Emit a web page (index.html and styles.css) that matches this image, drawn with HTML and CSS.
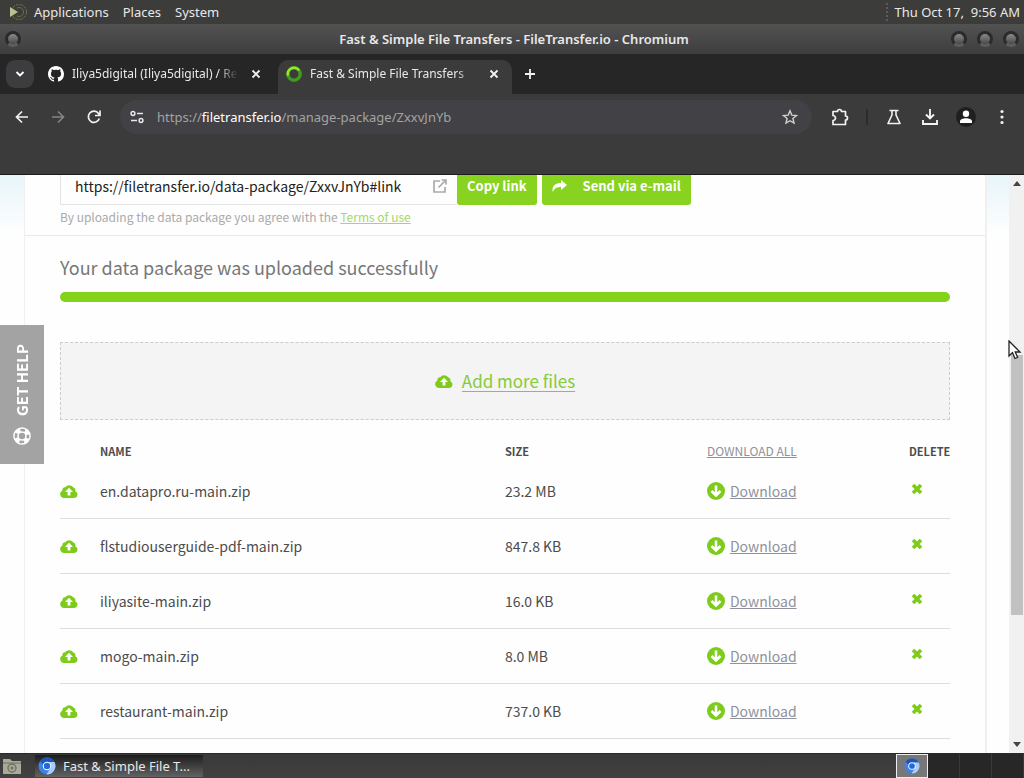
FILE: index.html
```
<!DOCTYPE html>
<html lang="en">
<head>
    <meta charset="UTF-8">
    <meta name="viewport" content="width=device-width, initial-scale=1.0">
    <title>Fast &amp; Simple File Transfers - FileTransfer.io</title>

    <link rel="stylesheet" href="styles.css">
</head>
<body>

    <!-- Shared icons -->
    <svg class="sprite" aria-hidden="true">
        <symbol id="cloud" viewBox="0 0 18 14">
            <path fill="#7ecb1c" d="M4 14a4 4 0 0 1-1.600-7.600A3 3 0 0 1 5.200 3.200 5 5 0 0 1 13.500 3.600 3 3 0 0 1 15.300 7.300 3.500 3.500 0 0 1 14.500 14z"/>
            <path fill="#fff" d="M9 3.800l4 4.200h-2.600v3.400H7.600V8H5z"/>
        </symbol>
        <symbol id="down" viewBox="0 0 18 18">
            <circle cx="9" cy="9" r="9" fill="#7ecb1c"/>
            <path d="M9 3.500v9.500M4.500 9L9 13.500 13.500 9" fill="none" stroke="#fff" stroke-width="2.600"/>
        </symbol>
        <symbol id="cross" viewBox="0 0 12 12">
            <path d="M2 2l8 8M10 2l-8 8" stroke="#7ecb1c" stroke-width="3.600" fill="none"/>
        </symbol>
        <symbol id="close" viewBox="0 0 10 10">
            <path d="M1.500 1.500l7 7M8.500 1.500l-7 7" stroke="#f2f2f2" stroke-width="1.800" fill="none"/>
        </symbol>
        <symbol id="chromium" viewBox="0 0 18 18">
            <circle cx="9" cy="9" r="8.500" fill="#3f82e8"/>
            <path d="M9 .5A8.500 8.500 0 0 1 16.400 5H9a4 4 0 0 0-3.800 3L2 4.200A8.500 8.500 0 0 1 9 .5z" fill="#1c57b8"/>
            <path d="M16.400 5A8.500 8.500 0 0 1 8.500 17.500L12.400 11A4 4 0 0 0 12 6.300L11 5z" fill="#a9cdfb"/>
            <circle cx="9" cy="9" r="4.200" fill="#fff"/>
            <circle cx="9" cy="9" r="3.200" fill="#2468d8"/>
        </symbol>
    </svg>

    <!-- Desktop panel -->
    <nav class="panel">
        <svg width="18" height="18" viewBox="0 0 18 18">
            <circle cx="10" cy="9" r="7.500" fill="none" stroke="#697346" stroke-dasharray="3 1"/>
            <path d="M8 5a4.500 4.500 0 1 1 0 8" fill="none" stroke="#697346"/>
            <path d="M1 4l8 5-8 5z" fill="#b9c28e"/>
        </svg>
        <a href="#">Applications</a>
        <a href="#">Places</a>
        <a href="#">System</a>
        <time class="clock">Thu Oct 17,&nbsp; 9:56 AM</time>
    </nav>

    <!-- Window title -->
    <header class="titlebar">
        <button class="knob" aria-label="Menu"></button>
        <h1>Fast &amp; Simple File Transfers - FileTransfer.io - Chromium</h1>
        <div class="knobs">
            <button class="knob" aria-label="Minimize"></button>
            <button class="knob" aria-label="Maximize"></button>
            <button class="knob" aria-label="Close"></button>
        </div>
    </header>

    <!-- Tabs -->
    <div class="tabs">
        <button class="tab-search" aria-label="Search tabs">
            <svg width="10" height="8" viewBox="0 0 10 8"><path d="M1.500 2L5 5.500 8.500 2" fill="none" stroke="#fff" stroke-width="1.800"/></svg>
        </button>
        <div class="tab">
            <svg width="16" height="16" viewBox="0 0 16 16"><path fill="#fff" d="M8 0C3.580 0 0 3.580 0 8c0 3.540 2.290 6.530 5.470 7.590.4.070.55-.17.55-.38 0-.19-.01-.82-.01-1.490-2.010.37-2.530-.49-2.690-.94-.09-.23-.48-.94-.82-1.130-.28-.15-.68-.52-.01-.53.63-.01 1.080.58 1.230.82.72 1.210 1.870.87 2.330.66.070-.52.28-.87.51-1.070-1.780-.2-3.640-.89-3.640-3.950 0-.87.31-1.590.82-2.150-.08-.2-.36-1.020.08-2.120 0 0 .67-.21 2.200.82.64-.18 1.320-.27 2-.27s1.360.09 2 .27c1.530-1.040 2.200-.82 2.200-.82.44 1.100.16 1.920.08 2.120.51.56.82 1.270.82 2.150 0 3.070-1.870 3.750-3.650 3.950.29.25.54.73.54 1.480 0 1.070-.01 1.930-.01 2.200 0 .21.15.46.55.38A8 8 0 0 0 16 8c0-4.420-3.580-8-8-8z"/></svg>
            <span class="tab-name">Iliya5digital (Iliya5digital) / Re</span>
            <button class="tab-close" aria-label="Close tab"><svg width="10" height="10"><use href="#close"/></svg></button>
        </div>
        <div class="tab active">
            <svg width="16" height="16" viewBox="0 0 16 16">
                <circle cx="8" cy="8" r="6.200" fill="none" stroke="#3f9c1c" stroke-width="3.400"/>
                <path d="M2 9.500A6.200 6.200 0 0 1 13 4.300" fill="none" stroke="#9be32c" stroke-width="2.600"/>
            </svg>
            <span class="tab-name">Fast &amp; Simple File Transfers</span>
            <button class="tab-close" aria-label="Close tab"><svg width="10" height="10"><use href="#close"/></svg></button>
        </div>
        <button class="new-tab" aria-label="New tab">
            <svg width="12" height="12" viewBox="0 0 12 12"><path d="M6 1v10M1 6h10" stroke="#f2f2f2" stroke-width="1.800"/></svg>
        </button>
    </div>

    <!-- Toolbar -->
    <div class="toolbar">
        <button aria-label="Back"><svg width="14" height="14" viewBox="0 0 14 14"><path d="M13 7H2M7 1.500L1.500 7 7 12.500" fill="none" stroke="#f2f2f2" stroke-width="1.700"/></svg></button>
        <button aria-label="Forward"><svg width="14" height="14" viewBox="0 0 14 14"><path d="M1 7h11M7 1.500L12.500 7 7 12.500" fill="none" stroke="#858585" stroke-width="1.600"/></svg></button>
        <button aria-label="Reload"><svg width="14" height="14" viewBox="0 0 14 14"><path d="M12.300 8.500A5.600 5.600 0 1 1 11.500 3.500L12.500 5M13 .5V5.500H8" fill="none" stroke="#f2f2f2" stroke-width="1.700"/></svg></button>
        <div class="address">
            <svg width="14" height="14" viewBox="0 0 14 14" fill="none" stroke="#e6e6e6" stroke-width="1.500"><circle cx="3" cy="3.500" r="1.900"/><path d="M7 3.500h6M1 10.500h6"/><circle cx="11" cy="10.500" r="1.900"/></svg>
            <div class="url" role="textbox" aria-label="Address">https://<b>filetransfer.io</b>/manage-package/ZxxvJnYb</div>
            <svg width="16" height="16" viewBox="0 0 16 16"><path d="M8 1.800l1.800 4.300 4.700.4-3.600 3 1.100 4.600L8 11.700l-4 2.400 1.100-4.600-3.600-3 4.700-.4z" fill="none" stroke="#d0d0d0" stroke-width="1.400"/></svg>
        </div>
        <button aria-label="Extensions"><svg width="18" height="18" viewBox="0 0 18 18"><path d="M2 3.500H6.500A2 2 0 0 1 10.500 3.500H14.500V8A2 2 0 0 1 14.500 12V16.500H2V12.500A2.200 2.200 0 0 0 2 7.500z" fill="none" stroke="#f2f2f2" stroke-width="1.700" stroke-linejoin="round"/></svg></button>
        <span class="divider"></span>
        <button aria-label="Experiments"><svg width="16" height="16" viewBox="0 0 16 16"><path d="M3.500 1.500h9M6 1.500V6L2 14.500h12L10 6V1.500" fill="none" stroke="#f2f2f2" stroke-width="1.600" stroke-linejoin="round"/></svg></button>
        <button aria-label="Downloads"><svg width="18" height="18" viewBox="0 0 18 18"><path d="M9 1v9M5 6.500l4 4 4-4M2 12v4h14v-4" fill="none" stroke="#f2f2f2" stroke-width="1.900"/></svg></button>
        <button aria-label="Profile"><svg width="20" height="20" viewBox="0 0 20 20"><circle cx="10" cy="10" r="10" fill="#1f1f1f"/><circle cx="10" cy="6.800" r="3.200" fill="#fff"/><path d="M4 16v-1.500c0-4.300 12-4.300 12 0V16z" fill="#fff"/></svg></button>
        <button aria-label="Menu"><svg width="4" height="16" viewBox="0 0 4 16" fill="#f2f2f2"><circle cx="2" cy="2.500" r="1.600"/><circle cx="2" cy="8" r="1.600"/><circle cx="2" cy="13.500" r="1.600"/></svg></button>
    </div>

    <!-- Web page -->
    <div class="viewport">
        <main class="page">
            <div class="card">
                <section class="share">
                    <div class="share-row">
                        <div class="link-box">
                            <input type="text" aria-label="Package link" value="https://filetransfer.io/data-package/ZxxvJnYb#link" readonly>
                            <svg width="14" height="14" viewBox="0 0 14 14"><path d="M7 2H1v11h11V8M8.500 1H13v4.500M13 1L5.500 8.500" fill="none" stroke="#aaa" stroke-width="1.700"/></svg>
                        </div>
                        <button class="btn copy">Copy link</button>
                        <button class="btn mail">
                            <svg width="15" height="12" viewBox="0 0 15 12"><path d="M9 0l6 5-6 5V7C5 7 2.500 8 .8 12-.5 6.500 3 3 9 3z" fill="#fff"/></svg>
                            Send via e-mail
                        </button>
                    </div>
                    <p class="terms">By uploading the data package you agree with the <a href="#">Terms of use</a></p>
                </section>

                <section class="files">
                    <h2>Your data package was uploaded successfully</h2>
                    <div class="progress"></div>

                    <div class="dropzone">
                        <svg width="18" height="14"><use href="#cloud"/></svg>
                        <a href="#">Add more files</a>
                    </div>

                    <table>
                        <thead>
                            <tr><th class="col-icon"></th><th class="col-name">Name</th><th class="col-size">Size</th><th class="col-get"><a href="#">Download all</a></th><th>Delete</th></tr>
                        </thead>
                        <tbody>
                            <tr>
                                <td><svg width="18" height="14"><use href="#cloud"/></svg></td>
                                <td>en.datapro.ru-main.zip</td>
                                <td>23.2 MB</td>
                                <td><div class="get"><svg width="18" height="18"><use href="#down"/></svg><a href="#">Download</a></div></td>
                                <td><button class="delete" aria-label="Delete"><svg width="12" height="12"><use href="#cross"/></svg></button></td>
                            </tr>
                            <tr>
                                <td><svg width="18" height="14"><use href="#cloud"/></svg></td>
                                <td>flstudiouserguide-pdf-main.zip</td>
                                <td>847.8 KB</td>
                                <td><div class="get"><svg width="18" height="18"><use href="#down"/></svg><a href="#">Download</a></div></td>
                                <td><button class="delete" aria-label="Delete"><svg width="12" height="12"><use href="#cross"/></svg></button></td>
                            </tr>
                            <tr>
                                <td><svg width="18" height="14"><use href="#cloud"/></svg></td>
                                <td>iliyasite-main.zip</td>
                                <td>16.0 KB</td>
                                <td><div class="get"><svg width="18" height="18"><use href="#down"/></svg><a href="#">Download</a></div></td>
                                <td><button class="delete" aria-label="Delete"><svg width="12" height="12"><use href="#cross"/></svg></button></td>
                            </tr>
                            <tr>
                                <td><svg width="18" height="14"><use href="#cloud"/></svg></td>
                                <td>mogo-main.zip</td>
                                <td>8.0 MB</td>
                                <td><div class="get"><svg width="18" height="18"><use href="#down"/></svg><a href="#">Download</a></div></td>
                                <td><button class="delete" aria-label="Delete"><svg width="12" height="12"><use href="#cross"/></svg></button></td>
                            </tr>
                            <tr>
                                <td><svg width="18" height="14"><use href="#cloud"/></svg></td>
                                <td>restaurant-main.zip</td>
                                <td>737.0 KB</td>
                                <td><div class="get"><svg width="18" height="18"><use href="#down"/></svg><a href="#">Download</a></div></td>
                                <td><button class="delete" aria-label="Delete"><svg width="12" height="12"><use href="#cross"/></svg></button></td>
                            </tr>
                        </tbody>
                    </table>
                </section>
            </div>
        </main>

        <div class="scrollbar">
            <svg width="8" height="5" viewBox="0 0 8 5"><path d="M0 5l4-5 4 5z" fill="#444"/></svg>
            <div class="track"><div class="thumb"></div></div>
            <svg width="8" height="5" viewBox="0 0 8 5"><path d="M0 0l4 5 4-5z" fill="#444"/></svg>
        </div>

        <button class="help">
            <svg width="18" height="18" viewBox="0 0 18 18"><circle cx="9" cy="9" r="6" fill="none" stroke="#fff" stroke-width="5.600"/><circle cx="9" cy="9" r="6" fill="none" stroke="#a3a3a3" stroke-width="2.600" stroke-dasharray="4.700 4.725" stroke-dashoffset="2.350"/></svg>
            <span>GET HELP</span>
        </button>

        <svg class="cursor" width="14" height="20" viewBox="0 0 14 20"><path d="M1 1v15l3.500-3.300L7 18.500l2.600-1.200L7.200 12H12z" fill="#fff" stroke="#222" stroke-width="1.300"/></svg>
    </div>

    <!-- Taskbar -->
    <footer class="taskbar">
        <button class="show-desktop" aria-label="Files">
            <svg width="20" height="18" viewBox="0 0 20 18"><path d="M1 2h7l2 2h9v13H1z" fill="#a9ab98"/><path d="M1 6h18" stroke="#6d705f"/><circle cx="10" cy="11" r="4" fill="none" stroke="#6d705f" stroke-width="1.300"/><circle cx="10" cy="11" r="1.500" fill="#6d705f"/></svg>
        </button>
        <button class="task">
            <svg width="18" height="18"><use href="#chromium"/></svg>
            <span>Fast &amp; Simple File T...</span>
        </button>
        <div class="workspaces">
            <button class="current" aria-label="Workspace 1"><svg width="16" height="16" viewBox="0 0 18 18"><use href="#chromium"/></svg></button>
            <button aria-label="Workspace 2"></button>
            <button aria-label="Workspace 3"></button>
            <button aria-label="Workspace 4"></button>
        </div>
    </footer>

</body>
</html>
```
FILE: styles.css
```
/* General Styling */
* { margin: 0; padding: 0; box-sizing: border-box; }
body {
    height: 100vh;
    display: flex;
    flex-direction: column;
    overflow: hidden;
    font-family: "Noto Sans", sans-serif;
    font-size: 13px;
    line-height: 18px;
    color: #e8e8e8;
    background: #3b3b3b;
}

button {
    font: inherit;
    color: inherit;
    background: none;
    border: none;
    cursor: pointer;
}

svg { display: block; flex: none; }
.sprite { position: absolute; width: 0; height: 0; }

/* Desktop panel */
.panel {
    height: 24px;
    flex: none;
    display: flex;
    align-items: center;
    padding: 0 4px 0 9px;
    background: #3c3c3b;
}

.panel a {
    color: #e8e8e8;
    text-decoration: none;
    margin-right: 14px;
}

.panel svg { margin-right: 7px; }

.clock {
    margin-left: auto;
    padding-left: 6px;
    border-left: 2px dotted #5c5c5c;
}

/* Window title */
.titlebar {
    height: 30px;
    flex: none;
    display: grid;
    grid-template-columns: 1fr auto 1fr;
    align-items: center;
    padding: 0 5px;
    background: linear-gradient(#525252, #3e3e3e);
}

.titlebar h1 {
    padding-left: 4px;
    font-size: 13px;
    font-weight: 600;
}

.knobs {
    display: flex;
    gap: 10px;
    justify-content: flex-end;
}

.knob {
    width: 16px;
    height: 16px;
    border-radius: 50%;
    border: 3px solid #2b2b2b;
    border-bottom-color: #5c5c5c;
    background: linear-gradient(#8a8a8a, #484848);
}

/* Tabs */
.tabs {
    height: 40px;
    flex: none;
    display: flex;
    align-items: flex-end;
    padding-left: 6px;
    background: #262626;
}

.tab-search {
    width: 28px;
    height: 28px;
    margin: 0 6px 6px 0;
    display: grid;
    place-items: center;
    border-radius: 9px;
    background: #3d3c3e;
}

.tab {
    width: 238px;
    height: 34px;
    display: flex;
    align-items: center;
    gap: 8px;
    padding: 0 12px 6px 8px;
    font-size: 12px;
}

.tab.active {
    width: 234px;
    padding-right: 8px;
    background: #3b3b3b;
    border-radius: 10px 10px 0 0;
}

.tab-name {
    flex: 1;
    white-space: nowrap;
    mask-image: linear-gradient(to left, transparent, #000 20px);
}

.tab-close { padding: 5px; }

.new-tab { padding: 14px 12px; }

/* Toolbar */
.toolbar {
    height: 81px;
    flex: none;
    display: flex;
    align-items: flex-start;
    padding: 6px 4px 0;
    background: #3b3b3b;
    border-bottom: 1px solid #1c1c1c;
}

.toolbar button {
    width: 36px;
    height: 34px;
    display: grid;
    place-items: center;
}

.address {
    flex: 1;
    height: 34px;
    display: flex;
    align-items: center;
    gap: 13px;
    margin: 0 10px 0 8px;
    padding: 0 14px 0 10px;
    border-radius: 17px;
    background: #424145;
}

.url { flex: 1; color: #a3a3a3; }
.url b { font-weight: 400; color: #fff; }

.divider {
    width: 2px;
    height: 16px;
    margin: 9px 8px;
    background: #2c2c2c;
}

/* Web page */
.viewport {
    position: relative;
    flex: 1;
    min-height: 0;
    display: flex;
    overflow: hidden;
    font-family: "Noto Sans CJK SC", sans-serif;
    color: #4c4c4c;
    background: #fefefe;
}

.page {
    flex: 1;
    padding: 0 22px 0 24px;
    background: linear-gradient(#e8f5fa, #fefefe 60px);
}

.card {
    min-height: 100%;
    background: #fefefe;
    border: 1px solid #f0f0f0;
    border-width: 0 2px 0 1px;
}

.share {
    padding: 0 35px 9px;
    border-bottom: 1px solid #e9e9e9;
}

.share-row {
    display: flex;
    height: 30px;
}

.link-box {
    width: 397px;
    display: flex;
    align-items: center;
    padding: 0 10px 8px 14px;
    border: 1px solid #e4e4e4;
    border-width: 0 0 1px 1px;
}

.link-box input {
    flex: 1;
    min-width: 0;
    height: 22px;
    border: none;
    outline: none;
    background: none;
    font: inherit;
    font-size: 14px;
    color: #222;
}

.btn {
    padding: 0 10px 8px;
    font-size: 13px;
    font-weight: 700;
    color: #fff;
    background: #87d31f;
    border-radius: 0 0 3px 3px;
}

.mail {
    display: flex;
    align-items: center;
    gap: 16px;
    margin-left: 5px;
}

.terms {
    margin-top: 3px;
    font-size: 12px;
    color: #aaa;
}

.terms a { color: #a5d76a; }

.files { padding: 0 35px; }

.files h2 {
    padding: 16px 0 10px;
    font-size: 18px;
    font-weight: 400;
    line-height: 30px;
    color: #777;
}

.progress {
    height: 10px;
    border-radius: 5px;
    background: #83d31b;
}

.dropzone {
    height: 78px;
    margin-top: 40px;
    display: flex;
    align-items: center;
    justify-content: center;
    gap: 9px;
    border: 1px dashed #ccc;
    background: #f4f4f4;
}

.dropzone a {
    font-size: 17px;
    color: #86cb35;
    text-underline-offset: 3px;
}

/* File table */
table {
    width: 100%;
    margin-top: 18px;
    border-spacing: 0;
    table-layout: fixed;
    font-size: 14px;
}

th {
    height: 26px;
    font-size: 11px;
    font-weight: 700;
    text-align: left;
    text-transform: uppercase;
}

th:last-child { text-align: right; }
th a { font-size: 12px; font-weight: 400; }

.col-icon { width: 40px; }
.col-name { width: 45.5%; }
.col-size { width: 22.7%; }
.col-get { width: 22.7%; }

td {
    height: 55px;
    border-bottom: 1px solid #ddd;
}

table a { color: #8f919b; }

.get {
    display: flex;
    align-items: center;
    gap: 5px;
}

.delete {
    display: block;
    padding: 0 0 4px 2px;
}

/* Scrollbar */
.scrollbar {
    width: 15px;
    display: flex;
    flex-direction: column;
    align-items: center;
    padding: 6px 0;
    background: #f1f1f1;
}

.track {
    flex: 1;
    width: 12px;
    padding: 169px 0 127px;
}

.thumb {
    height: 100%;
    background: #c1c1c1;
}

/* Help tab and pointer lie over the page */
.help {
    position: absolute;
    left: 0;
    top: 150px;
    width: 44px;
    height: 139px;
    display: flex;
    flex-direction: column-reverse;
    align-items: center;
    justify-content: center;
    gap: 10px;
    font-size: 15px;
    font-weight: 700;
    color: #fff;
    background: #a3a3a3;
}

.help span {
    writing-mode: vertical-rl;
    transform: rotate(180deg);
}

.cursor {
    position: absolute;
    right: 2px;
    top: 165px;
}

/* Taskbar */
.taskbar {
    height: 25px;
    flex: none;
    display: flex;
    align-items: center;
    padding-left: 2px;
    border-top: 1px solid #2a2a2a;
    background: linear-gradient(#383838, #424242);
}

.task {
    width: 168px;
    height: 22px;
    margin-left: 13px;
    padding: 0 6px 0 3px;
    display: flex;
    align-items: center;
    gap: 7px;
    background: linear-gradient(#1d1d1d, #626262);
}

.task span { white-space: nowrap; }

.workspaces {
    display: flex;
    height: 100%;
    margin-left: auto;
    background: #272727;
}

.workspaces button {
    width: 32px;
    border-right: 1px solid #3a3a3a;
    display: grid;
    place-items: center;
}

.workspaces .current {
    border: 1px solid #eee;
    background: #777;
}
```
